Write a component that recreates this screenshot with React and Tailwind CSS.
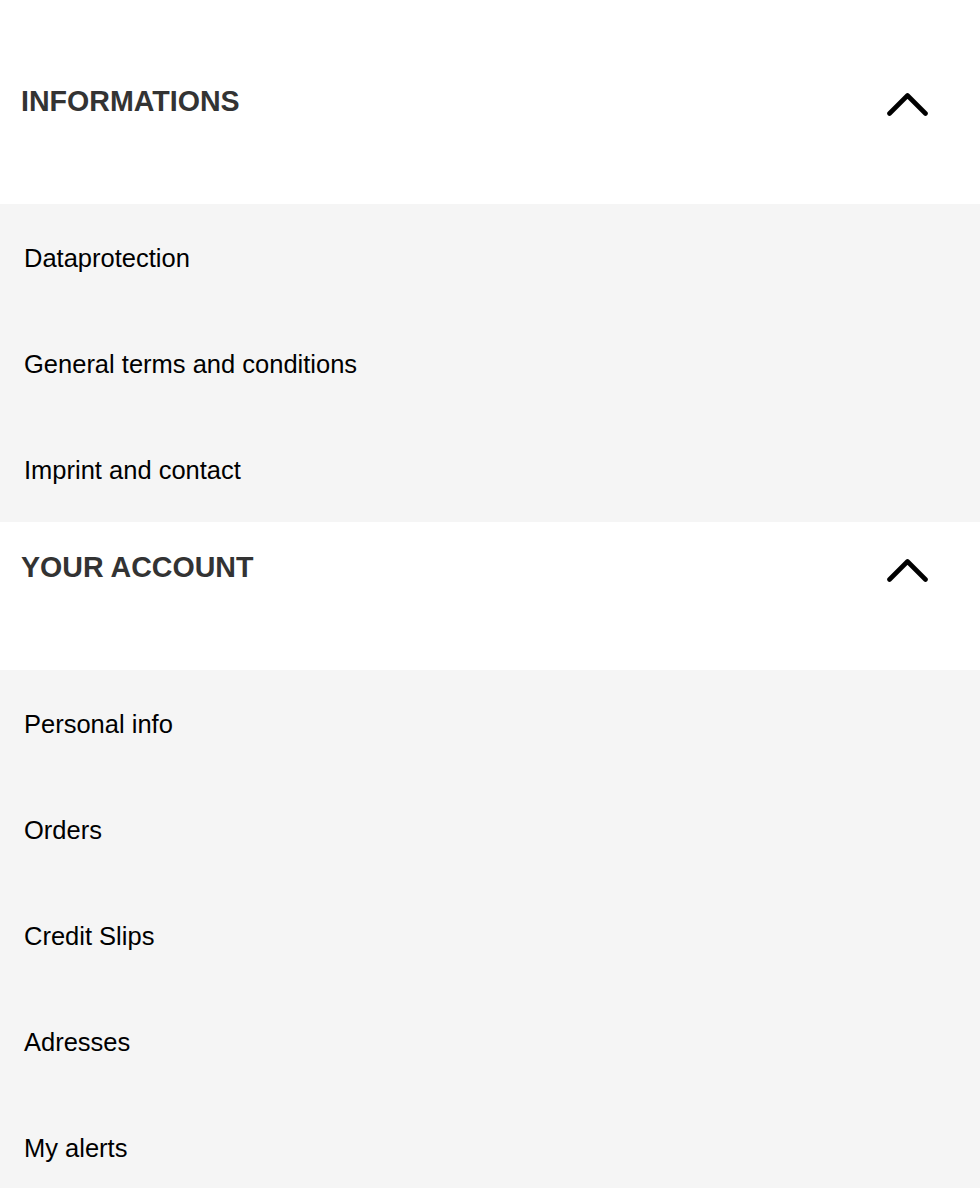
import React from "react";

const sections = [
  {
    title: "INFORMATIONS",
    first: true,
    links: ["Dataprotection", "General terms and conditions", "Imprint and contact"],
  },
  {
    title: "YOUR ACCOUNT",
    links: ["Personal info", "Orders", "Credit Slips", "Adresses", "My alerts"],
  },
];

function ChevronUp() {
  return (
    <svg width="41" height="23" viewBox="0 0 41 23" fill="none" className="block">
      <path
        d="M2.5 20.5 L20.5 2.5 L38.5 20.5"
        stroke="#000"
        strokeWidth="4.6"
        strokeLinecap="round"
        strokeLinejoin="round"
      />
    </svg>
  );
}

export default function App() {
  return (
    <div className="w-full bg-white font-['Liberation_Sans',Arial,sans-serif]">
      {sections.map((s) => (
        <section key={s.title}>
          {/* entete de la section */}
          <div
            className={`flex items-start justify-between bg-white pl-[21px] pr-[52px] ${
              s.first ? "h-[204px] pt-[87px]" : "h-[148px] pt-[31px]"
            }`}
          >
            <h2 className="text-[28.6px] leading-none font-bold text-[#333333]">{s.title}</h2>
            <div className="mt-[6px]">
              <ChevronUp />
            </div>
          </div>

          {/* liens */}
          <ul className="bg-[#f5f5f5]">
            {s.links.map((l) => (
              <li key={l} className="flex h-[106px] items-center px-[24px] pt-[3px]">
                <a href="#" className="text-[25.5px] text-black">
                  {l}
                </a>
              </li>
            ))}
          </ul>
        </section>
      ))}
    </div>
  );
}
